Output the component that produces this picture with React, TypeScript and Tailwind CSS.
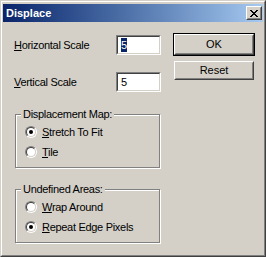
import React from 'react';

const font = { fontFamily: '"Liberation Sans", Arial, sans-serif' };

const Radio = ({ checked }: { checked?: boolean }) => (
  <span className="block w-[12px] h-[12px] rounded-full border border-t-[#808080] border-l-[#808080] border-r-white border-b-white">
    <span className="flex items-center justify-center w-full h-full rounded-full border border-t-[#404040] border-l-[#404040] border-r-[#d4d0c8] border-b-[#d4d0c8] bg-white">
      {checked && <span className="block w-[4px] h-[4px] rounded-full bg-black" />}
    </span>
  </span>
);

const RadioRow = ({ checked, mn, rest }: { checked?: boolean; mn: string; rest: string }) => (
  <div className="flex items-center h-[12px] gap-[5px]">
    <Radio checked={checked} />
    <span className="text-[11px] leading-none tracking-[-0.3px] text-black">
      <u className="underline-offset-[1px]">{mn}</u>
      {rest}
    </span>
  </div>
);

const Group = ({ title, children }: { title: string; children: React.ReactNode }) => (
  <div className="relative w-[145px] h-[54px] ml-[1px] border border-[#808080] shadow-[1px_1px_0_#fff,inset_1px_1px_0_#fff] pl-[9px] pt-[11px] flex flex-col gap-[8px]">
    <span className="absolute -top-[7px] left-[5px] px-[2px] bg-[#d4d0c8] text-[11px] leading-[13px] tracking-[-0.3px] text-black">
      {title}
    </span>
    {children}
  </div>
);

const Field = ({ value, selected }: { value: string; selected?: boolean }) => (
  <div className="w-[45px] h-[20px] border border-t-[#808080] border-l-[#808080] border-r-white border-b-white">
    <div className="w-full h-full border border-t-[#404040] border-l-[#404040] border-r-[#d4d0c8] border-b-[#d4d0c8] bg-white pl-[3px] flex items-center">
      <span className={`text-[11px] leading-[14px] ${selected ? 'bg-[#0a246a] text-white' : 'text-black'}`}>
        {value}
      </span>
    </div>
  </div>
);

const Button = ({ label, isDefault }: { label: string; isDefault?: boolean }) => (
  <div className={isDefault ? 'border border-black' : ''}>
    <div className="border border-t-white border-l-white border-r-[#404040] border-b-[#404040]">
      <div
        className={`flex items-center justify-center border border-t-[#d4d0c8] border-l-[#d4d0c8] border-r-[#808080] border-b-[#808080] text-[11px] text-black ${
          isDefault ? 'h-[19px]' : 'h-[17px]'
        }`}
      >
        {label}
      </div>
    </div>
  </div>
);

export default function App() {
  return (
    <div style={font} className="w-[266px] h-[257px] bg-[#d4d0c8] select-none">
      <div className="w-full h-full border border-t-[#d4d0c8] border-l-[#d4d0c8] border-r-[#404040] border-b-[#404040]">
        <div className="w-full h-full border border-t-white border-l-white border-r-[#808080] border-b-[#808080] p-[1px] pt-[2px] flex flex-col">
          {/* Title bar */}
          <div className="h-[18px] flex items-center justify-between bg-linear-to-r from-[#0a246a] to-[#a6caf0] pl-[3px] pr-[1px]">
            <span className="text-white font-bold text-[11px] leading-none">Displace</span>
            <div className="w-[16px] h-[14px] border border-t-white border-l-white border-r-[#404040] border-b-[#404040] bg-[#d4d0c8]">
              <div className="w-full h-full border border-t-[#d4d0c8] border-l-[#d4d0c8] border-r-[#808080] border-b-[#808080] flex items-center justify-center">
                <svg width="8" height="7" viewBox="0 0 8 7" shapeRendering="crispEdges">
                  <path
                    d="M0 0h2v1h-2zM6 0h2v1h-2zM1 1h2v1h-2zM5 1h2v1h-2zM2 2h4v1h-4zM3 3h2v1h-2zM2 4h4v1h-4zM1 5h2v1h-2zM5 5h2v1h-2zM0 6h2v1h-2zM6 6h2v1h-2z"
                    fill="#000"
                  />
                </svg>
              </div>
            </div>
          </div>

          {/* Body */}
          <div className="flex pl-[11px] pt-[11px] gap-[12px]">
            <div className="w-[147px] flex flex-col">
              <div className="mt-[2px] flex items-center justify-between h-[20px]">
                <span className="text-[11px] tracking-[-0.3px] text-black">
                  <u className="underline-offset-[1px]">H</u>orizontal Scale
                </span>
                <Field value="5" selected />
              </div>
              <div className="mt-[17px] flex items-center justify-between h-[20px]">
                <span className="text-[11px] tracking-[-0.3px] text-black">
                  <u className="underline-offset-[1px]">V</u>ertical Scale
                </span>
                <Field value="5" />
              </div>

              <div className="mt-[22px]">
                <Group title="Displacement Map:">
                  <RadioRow checked mn="S" rest="tretch To Fit" />
                  <RadioRow mn="T" rest="ile" />
                </Group>
              </div>

              <div className="mt-[21px]">
                <Group title="Undefined Areas:">
                  <RadioRow mn="W" rest="rap Around" />
                  <RadioRow checked mn="R" rest="epeat Edge Pixels" />
                </Group>
              </div>
            </div>

            <div className="w-[82px] flex flex-col">
              <Button label="OK" isDefault />
              <div className="mt-[5px] px-[1px]">
                <Button label="Reset" />
              </div>
            </div>
          </div>
        </div>
      </div>
    </div>
  );
}
